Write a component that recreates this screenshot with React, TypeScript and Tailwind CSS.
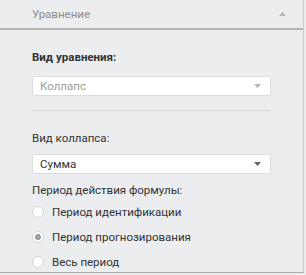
const font = { fontFamily: 'Roboto, "Open Sans", sans-serif' };

function Caret({ up, light }: { up?: boolean; light?: boolean }) {
    return (
        <svg width="7" height="4" viewBox="0 0 7 4" className={light ? "text-[#b5b5b5]" : "text-[#666]"}>
            <path d={up ? "M0 4 L3.5 0 L7 4 Z" : "M0 0 L3.5 4 L7 0 Z"} fill="currentColor" />
        </svg>
    );
}

function Select({ value, disabled }: { value: string; disabled?: boolean }) {
    return (
        <div className="flex h-[20px] items-center justify-between rounded-[3px] border border-[#dcdcdc] bg-white pl-[7px] pr-[9px]">
            <span className={`text-[11.5px] ${disabled ? "text-[#9a9a9a]" : "text-[#333]"}`}>{value}</span>
            <Caret light={disabled} />
        </div>
    );
}

function Radio({ label, checked }: { label: string; checked?: boolean }) {
    return (
        <div className="flex h-[25px] items-center gap-[8px]">
            <span className="flex h-[12px] w-[12px] items-center justify-center rounded-full border border-[#d4d4d4] bg-white">
                {checked && <span className="h-[6px] w-[6px] rounded-full border border-[#8a8a8a] bg-[#a5a5a5]" />}
            </span>
            <span className="text-[11.5px] text-[#333]">{label}</span>
        </div>
    );
}

export default function App() {
    return (
        <div className="h-[275px] w-[306px] bg-[#ecedee] leading-[18px]" style={font}>
            <div className="h-[273px] w-[304px] border-r border-b border-[#a9aaab] border-r-[#c9cacb]">
                <div className="flex h-[30px] items-center justify-between border-b-2 border-[#b3b4b5] pl-[32px] pr-[17px]">
                    <span className="text-[11.5px] text-[#8d8d8d]">Уравнение</span>
                    <Caret up light />
                </div>
                <div className="px-[32px]">
                    <div className="mt-[18px] text-[11.5px] font-bold text-[#333]">Вид уравнения:</div>
                    <div className="mt-[10px]">
                        <Select value="Коллапс" disabled />
                    </div>
                    <div className="mt-[14px] border-t border-[#d4d5d6]" />
                    <div className="mt-[18px] text-[11.5px] text-[#333]">Вид коллапса:</div>
                    <div className="mt-[7px]">
                        <Select value="Сумма" />
                    </div>
                    <div className="mt-[7px] text-[11.5px] text-[#333]">Период действия формулы:</div>
                    <div className="mt-0 flex flex-col">
                        <Radio label="Период идентификации" />
                        <Radio label="Период прогнозирования" checked />
                        <Radio label="Весь период" />
                    </div>
                </div>
            </div>
        </div>
    );
}
